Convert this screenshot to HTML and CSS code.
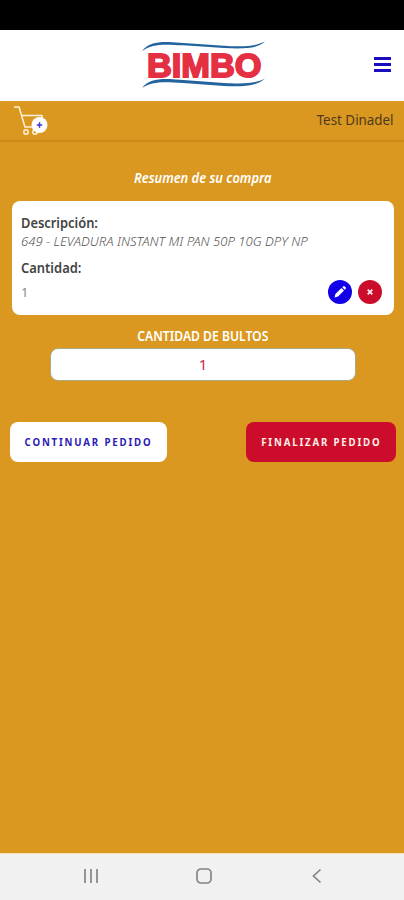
FILE: index.html
```
<!DOCTYPE html>
<html lang="es">
<head>
<meta charset="utf-8">
<meta name="viewport" content="width=device-width, initial-scale=1">
<title>Resumen de su compra</title>
<link rel="stylesheet" href="styles.css">
</head>
<body>
<div class="status"></div>
<header class="header">
  <svg class="logo" viewBox="0 0 130 56" role="img" aria-label="Bimbo">
    <g fill="#23649f">
      <path d="M4 13C12 3 24 3.500 42 4.700L86 7.700C106 9 118 8 127 3.500C120 10.500 106 11 86 10L45 7.300C24 6 14 6 4 13Z"/>
      <path d="M4 50C12 40 24 40.500 42 41.700L86 45C106 46 118 45.500 127 40.500C120 47.500 106 49 86 48L45 45C24 43.500 14 43.500 4 50Z"/>
    </g>
    <text class="logo-text" x="9" y="38.500" textLength="114.500" lengthAdjust="spacingAndGlyphs">BIMBO</text>
  </svg>
  <div class="menu"><i></i><i></i><i></i></div>
</header>
<div class="bar">
  <svg class="cart" viewBox="0 0 40 34">
    <g fill="none" stroke="#fff2d8" stroke-width="1.5" stroke-linejoin="round">
      <path d="M1 3H6L12 23H29M8.500 11.500H29V17"/>
      <circle cx="13" cy="28" r="2.200"/><circle cx="22" cy="28" r="2.200"/>
    </g>
    <circle cx="26.500" cy="21" r="8" fill="#fff"/>
    <path d="M26.500 18.300V23.700M23.800 21H29.200" stroke="#3d38c5" stroke-width="1.500"/>
  </svg>
  <span class="user"><span class="t t-user">Test Dinadel</span></span>
</div>
<main class="main">
  <h1 class="title"><span class="t t-title">Resumen de su compra</span></h1>
  <section class="card">
    <div class="label"><span class="t t-desc">Descripción:</span></div>
    <div class="item"><span class="t t-item">649 - LEVADURA INSTANT MI PAN 50P 10G DPY NP</span></div>
    <div class="label qty-label"><span class="t t-qty">Cantidad:</span></div>
    <div class="row">
      <span class="qty">1</span>
      <div class="actions">
        <svg viewBox="0 0 24 24"><circle cx="12" cy="12" r="12" fill="#1100e8"/><path d="M6.500 17.500L7.400 14L13.500 8L16 10.500L10 16.600ZM14.300 7.200L15.300 6.300Q16 5.700 16.700 6.400L17.600 7.300Q18.300 8 17.700 8.700L16.800 9.700Z" fill="#fff"/></svg>
        <svg viewBox="0 0 24 24"><circle cx="12" cy="12" r="12" fill="#cc0c2b"/><path d="M9.700 9.700L14.300 14.300M14.300 9.700L9.700 14.300" stroke="#ffe9ee" stroke-width="1.800"/></svg>
      </div>
    </div>
  </section>
  <div class="total-label"><span class="t t-total">CANTIDAD DE BULTOS</span></div>
  <div class="total">1</div>
  <div class="buttons">
    <a class="btn btn-light"><span class="t t-cont">CONTINUAR PEDIDO</span></a>
    <a class="btn btn-red"><span class="t t-fin">FINALIZAR PEDIDO</span></a>
  </div>
</main>
<nav class="nav">
  <svg viewBox="0 0 16 16"><path d="M2 1V15M8 1V15M14 1V15"/></svg>
  <svg viewBox="0 0 16 16"><rect x="1" y="1" width="14" height="14" rx="4"/></svg>
  <svg viewBox="0 0 16 16"><path d="M11.500 1.500L4.500 8L11.500 14.500"/></svg>
</nav>
</body>
</html>
```
FILE: styles.css
```
* { box-sizing: border-box; }
body {
  margin: 0;
  height: 900px;
  display: flex;
  flex-direction: column;
  overflow: hidden;
  background: #da9820;
  font-family: "Noto Sans", "Open Sans", sans-serif;
  color: #444;
}
svg { display: block; }
.t { display: inline-block; white-space: nowrap; }
.status { height: 30px; background: #000; }
.header {
  height: 71px;
  background: #fff;
  display: flex;
  align-items: center;
  justify-content: space-between;
  padding: 0 13px 0 138px;
}
.logo { width: 130px; height: 56px; }
.logo-text {
  font: bold 33px "Liberation Sans", sans-serif;
  fill: #e52f43;
  stroke: #e52f43;
  stroke-width: 1.8px;
}
.menu { width: 17px; display: grid; gap: 3px; margin-top: -2px; }
.menu i { height: 3px; background: #1a0dc0; }
.bar {
  height: 41px;
  display: flex;
  justify-content: space-between;
  padding: 4px 10px 0 13px;
  border-bottom: 2px solid #c88a19;
}
.cart { width: 40px; height: 34px; margin-top: -1px; }
.user { font-size: 14px; line-height: 29px; color: #4d3a1c; }
.main { flex: 1; }
.title {
  margin: 25px 0 0;
  text-align: center;
  font-size: 14px;
  line-height: 22px;
  font-style: italic;
  font-weight: 600;
  color: #fff;
}
.card {
  height: 114px;
  margin: 12px 10px 0 12px;
  padding: 12px 12px 0 9px;
  background: #fff;
  border-radius: 8px;
}
.label { font-size: 14px; line-height: 19px; font-weight: 600; }
.item { font-size: 13.5px; line-height: 19px; font-style: italic; font-weight: 300; color: #555; }
.qty-label { margin-top: 7px; }
.row { display: flex; align-items: center; justify-content: space-between; height: 29px; }
.qty { font-size: 13px; color: #888; }
.actions { display: flex; gap: 6px; }
.actions svg { width: 24px; height: 24px; }
.total-label { margin-top: 12px; padding-left: 2px; text-align: center; color: #fff; font-size: 13.5px; line-height: 19px; font-weight: 600; }
.total {
  width: 306px;
  height: 33px;
  margin: 2px auto 0 50px;
  border: 1px solid #a6ab86;
  border-radius: 8px;
  background: #fff;
  text-align: center;
  font-size: 15px;
  line-height: 31px;
  color: #c02c50;
}
.buttons { display: flex; justify-content: space-between; margin: 41px 8px 0 10px; }
.btn {
  height: 40px;
  border-radius: 8px;
  display: flex;
  align-items: center;
  justify-content: center;
  font-size: 10.5px;
  font-weight: 700;
  letter-spacing: 2px;
}
.btn-light { width: 157px; background: #fff; color: #2b1bb5; }
.btn-red { width: 150px; background: #cc0c2b; color: #fff0e8; }
.t-user { transform: scaleX(.955); transform-origin: right; }
.t-title { transform: translateX(1px) scaleX(.92); }
.t-desc { transform: scaleX(.92); transform-origin: left; }
.t-qty { transform: scaleX(.925); transform-origin: left; }
.t-item { transform: scaleX(.97); transform-origin: left; }
.t-total { transform: scaleX(.9); }
.t-cont, .t-fin { transform: scaleX(.92); }
.nav {
  height: 47px;
  background: #f1f1f1;
  border-top: 1px solid #f7e3b8;
  display: flex;
  justify-content: space-between;
  align-items: center;
  padding: 0 79px 2px 83px;
}
.nav svg { width: 16px; height: 16px; fill: none; stroke: #858585; stroke-width: 1.7; }
```
